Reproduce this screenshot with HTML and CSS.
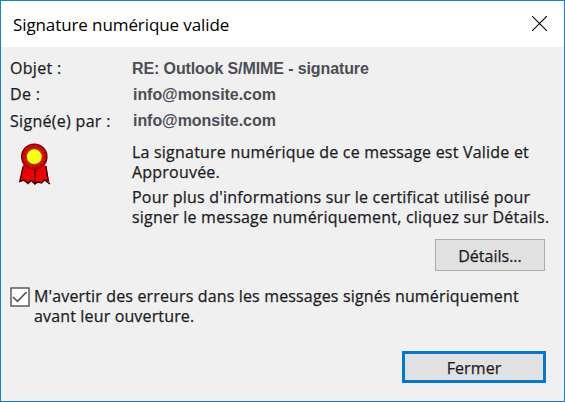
FILE: index.html
```html
<!DOCTYPE html>
<html lang="fr">
<head>
    <meta charset="UTF-8">
    <meta name="viewport" content="width=device-width, initial-scale=1.0">
    <title>Signature numérique valide</title>
    <link rel="stylesheet" href="styles.css">
</head>
<body>
    <div class="dialog">
        <div class="titlebar">
            <h1 class="title">Signature numérique valide</h1>
            <button class="close" aria-label="Fermer la fenêtre">
                <svg width="15" height="15" viewBox="0 0 15 15">
                    <path d="M0 0l15 15M15 0L0 15" stroke="#000" stroke-width="1.1"/>
                </svg>
            </button>
        </div>

        <div class="content">
            <div class="fields">
                <div class="label">Objet :</div>
                <div class="value value-objet">RE: Outlook S/MIME - signature</div>
                <div class="label">De :</div>
                <div class="value value-mail">info@monsite.com</div>
                <div class="label">Signé(e) par :</div>
                <div class="value value-mail">info@monsite.com</div>
            </div>

            <div class="status">
                <svg class="ribbon" width="32" height="44" viewBox="0 0 32 44">
                    <path d="M4 22L.8 38.500l4-1.500 4.200 3.500 3-3 4 3.500 3-2 3.500 1 3-3 5 2.500-3.500-17z" fill="#f00000"/>
                    <path d="M4 24L.8 38.500l4-1.500 4.200 3.500 3-3 4 3.500M27 23l2 15M16 25v16l3-2 3.500 1 3-3 5.500 4" fill="none" stroke="#300" stroke-width="1.400"/>
                    <circle cx="15.300" cy="13.700" r="12.600" fill="#f00000" stroke="#700" stroke-width="1.400"/>
                    <circle cx="15.300" cy="13.700" r="10.600" fill="none" stroke="#a80000" stroke-width="2.800" stroke-dasharray="1.300 3.100"/>
                    <circle cx="15.300" cy="13.700" r="8" fill="#ffff10" stroke="#8a4a00" stroke-width="1.300"/>
                </svg>
                <div class="message">
                    <p>La signature numérique de ce message est Valide et<br>Approuvée.</p>
                    <p>Pour plus d'informations sur le certificat utilisé pour<br>signer le message numériquement, cliquez sur Détails.</p>
                </div>
            </div>

            <button class="button details">Détails...</button>

            <label class="warn">
                <input type="checkbox" class="warn-input" checked>
                <svg class="checkbox" width="20" height="20" viewBox="0 0 20 20">
                    <rect x="1" y="1" width="18" height="18" fill="#fff" stroke="#444" stroke-width="1.300"/>
                    <path d="M3 10l4.500 4.300L16.500 5" fill="none" stroke="#555" stroke-width="1.700"/>
                </svg>
                <span class="warn-text">M'avertir des erreurs dans les messages signés numériquement<br>avant leur ouverture.</span>
            </label>

            <button class="button fermer">Fermer</button>
        </div>
    </div>
</body>
</html>
```

FILE: styles.css
```css
* {
    box-sizing: border-box;
    margin: 0;
    padding: 0;
}

body {
    font-family: "Open Sans", "Noto Sans", sans-serif;
    font-size: 16px;
    color: #1c1c24;
}

.dialog {
    width: 565px;
    height: 402px;
    background-color: #f0f0f0;
    border: 1px solid #1a80d4;
    display: flex;
    flex-direction: column;
}

.titlebar {
    height: 46px;
    background-color: #fff;
    display: flex;
    justify-content: space-between;
    align-items: center;
    padding: 0 17px 0 12px;
}

.title {
    font-size: 17px;
    font-weight: normal;
    letter-spacing: -0.1px;
    color: #000;
    white-space: nowrap;
}

.close {
    border: none;
    background: none;
    display: flex;
    margin-top: -1px;
}

.content {
    display: flex;
    flex-direction: column;
    padding: 8px 19px 0 9px;
    white-space: nowrap;
}

.fields {
    display: grid;
    grid-template-columns: 122px 1fr;
    grid-template-rows: 26px 26px 27px;
    align-items: center;
}

.label {
    letter-spacing: 0.3px;
    -webkit-text-stroke: 0.25px;
}

.value {
    font-family: "Liberation Sans", Arial, sans-serif;
    font-weight: bold;
    color: #4d4d55;
}

.value-objet {
    letter-spacing: -0.11px;
    padding-top: 2px;
}

.value-mail {
    padding: 1px 0 0 1px;
    letter-spacing: -0.05px;
}

.status {
    display: grid;
    grid-template-columns: 122px 1fr;
    margin-top: 9px;
}

.ribbon {
    margin-left: 9px;
}

.message {
    line-height: 19.500px;
    letter-spacing: 0.21px;
    -webkit-text-stroke: 0.25px;
}

.message p + p {
    margin-top: 6px;
}

.button {
    font-family: inherit;
    font-size: 16px;
    color: #1c1c24;
    background-color: #e1e1e1;
    align-self: flex-end;
    -webkit-text-stroke: 0.25px;
}

.details {
    width: 110px;
    height: 32px;
    border: 1px solid #adadad;
    margin-top: 12px;
    padding-top: 1px;
}

.warn {
    display: flex;
    gap: 4px;
    margin-top: 16px;
    line-height: 19.500px;
    letter-spacing: 0.15px;
    -webkit-text-stroke: 0.25px;
}

.warn-input {
    display: none;
}

.fermer {
    width: 144px;
    height: 32px;
    border: 3px solid #0078d7;
    margin: 25px -1px 0 0;
    padding-top: 1px;
    letter-spacing: 0.1px;
}
```
